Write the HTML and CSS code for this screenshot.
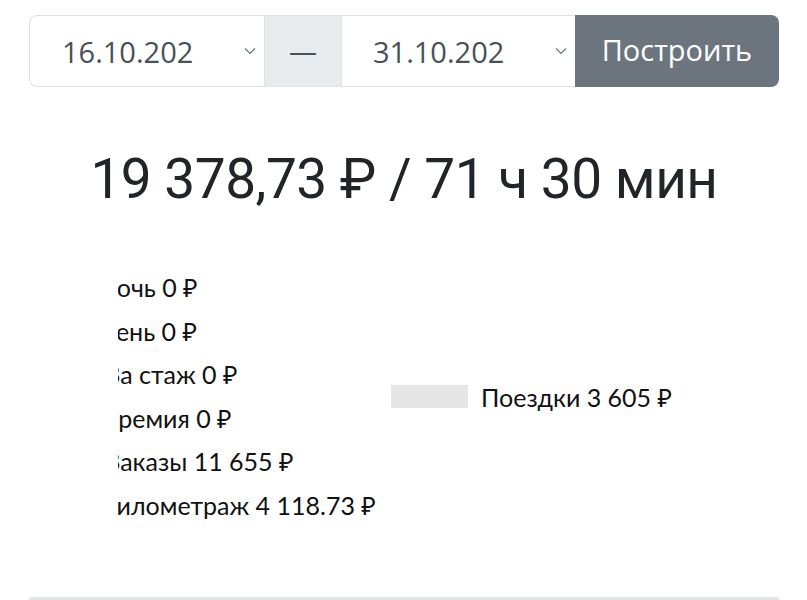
FILE: index.html
```html
<!DOCTYPE html>
<html lang="ru">
<head>
<meta charset="utf-8">
<link rel="stylesheet" href="styles.css">
</head>
<body>
<div class="page">
  <form class="range">
    <div class="select">
      <span class="select-value">16.10.202</span>
      <svg class="chev" viewBox="0 0 12 8" width="12" height="8"><path d="M1 1.5 L6 6.5 L11 1.5" fill="none" stroke="#6c757d" stroke-width="1.2"/></svg>
    </div>
    <div class="addon">—</div>
    <div class="select">
      <span class="select-value">31.10.202</span>
      <svg class="chev" viewBox="0 0 12 8" width="12" height="8"><path d="M1 1.5 L6 6.5 L11 1.5" fill="none" stroke="#6c757d" stroke-width="1.2"/></svg>
    </div>
    <button class="btn" type="button">Построить</button>
  </form>

  <h1 class="total">19 378,73 ₽ / 71 ч 30 мин</h1>

  <div class="legend">
    <div class="legend-clip">
      <ul class="legend-list">
        <li class="item off-1">Ночь 0 ₽</li>
        <li class="item off-2">День 0 ₽</li>
        <li class="item off-3">За стаж 0 ₽</li>
        <li class="item off-4">Премия 0 ₽</li>
        <li class="item off-5">Заказы 11 655 ₽</li>
        <li class="item off-6">Километраж 4 118.73 ₽</li>
      </ul>
    </div>
    <div class="legend-side">
      <span class="swatch"></span>
      <span class="side-label">Поездки 3 605 ₽</span>
    </div>
  </div>

  <div class="footer-line"></div>
</div>
</body>
</html>
```

FILE: styles.css
```css
* { box-sizing: border-box; }
html, body { margin: 0; padding: 0; background: #fff; }
body { font-family: "Lato", "Noto Sans", sans-serif; color: #212529; }
.page { padding: 15px 28px 0 29px; }

.range {
  display: flex;
  height: 72px;
  margin: 0;
}
.select {
  flex: 0 0 235px;
  display: flex;
  align-items: center;
  justify-content: space-between;
  padding: 0 8px 0 32px;
  border: 1.5px solid #dee2e6;
  background: #fff;
}
.select:first-child { border-radius: 8px 0 0 8px; border-right: none; }
.select:nth-child(3) { flex-basis: 233px; padding-left: 31px; border-left: none; border-right: none; }
.select-value {
  font-family: "Open Sans", "Noto Sans", sans-serif;
  font-size: 29px;
  color: #495057;
}
.chev { display: block; }
.addon {
  flex: 0 0 78px;
  display: flex;
  align-items: center;
  justify-content: center;
  background: #e9ecef;
  border: 1.5px solid #dee2e6;
  font-family: "Open Sans", sans-serif;
  font-size: 28px;
  color: #495057;
  padding-bottom: 3px;
}
.btn {
  flex: 1 1 auto;
  border: none;
  background: #6c757d;
  color: #fff;
  font-family: "Open Sans", "Noto Sans", sans-serif;
  font-size: 29px;
  border-radius: 0 8px 8px 0;
  padding: 0 0 4px;
}

.total {
  margin: 56px 0 0;
  text-align: center;
  font-family: "Roboto", sans-serif;
  font-weight: 400;
  font-size: 55px;
  line-height: 72px;
  color: #212529;
  letter-spacing: -0.5px;
}

.legend {
  display: flex;
  align-items: center;
  margin-top: 51px;
  font-family: "Lato", "Noto Sans", sans-serif;
  font-size: 25px;
  color: #111;
}
.legend-clip {
  margin-left: 89px;
  width: 273px;
  overflow: hidden;
}
.legend-list { list-style: none; margin: 0; padding: 0; }
.item { height: 43.5px; line-height: 43.5px; white-space: nowrap; }
.off-1 { margin-left: -20px; }
.off-2 { margin-left: -21px; }
.off-3 { margin-left: -12px; }
.off-4 { margin-left: -18px; }
.off-5 { margin-left: -12px; }
.off-6 { margin-left: -18px; }

.legend-side {
  display: flex;
  align-items: center;
  gap: 13px;
}
.swatch {
  display: block;
  width: 77px;
  height: 23px;
  background: #e6e6e6;
}

.footer-line {
  margin-top: 70px;
  height: 3px;
  background: #e3e5e8;
}
```
